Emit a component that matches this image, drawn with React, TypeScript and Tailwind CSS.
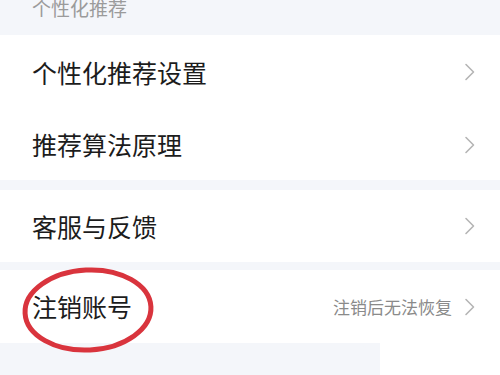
import React from "react";

const font = { fontFamily: '"Noto Sans CJK SC", "Noto Sans", sans-serif' };

function Chevron() {
  return (
    <svg width="12" height="18" viewBox="0 0 12 18" fill="none" className="shrink-0">
      <path d="M2 1.5 L9.5 9 L2 16.5" stroke="#b5b5b5" strokeWidth="1.6" strokeLinecap="round" strokeLinejoin="round" />
    </svg>
  );
}

function Row({ label, hint, h, circled }: { label: string; hint?: string; h: string; circled?: boolean }) {
  return (
    <div className={`relative flex items-center justify-between bg-white pl-[32px] pr-[24px] ${h}`}>
      <span className="text-[25px] leading-none text-[#1c1c1c]">{label}</span>
      <div className="flex items-center gap-[12px]">
        {hint && <span className="text-[17px] leading-none text-[#8a8a8a]">{hint}</span>}
        <Chevron />
      </div>
      {circled && (
        <svg className="pointer-events-none absolute left-[20px] top-[-5px]" width="136" height="90" viewBox="0 0 136 90">
          <ellipse cx="68" cy="45" rx="63" ry="40" fill="none" stroke="#d9343d" strokeWidth="5" transform="rotate(-3 68 45)" />
        </svg>
      )}
    </div>
  );
}

export default function App() {
  return (
    <div className="h-[375px] w-[500px] overflow-hidden bg-[#f4f6fa]" style={font}>
      <div className="flex h-[35px] items-start pl-[32px]">
        <span className="-mt-[2px] text-[19px] leading-none text-[#9b9b9b]">个性化推荐</span>
      </div>
      <Row label="个性化推荐设置" h="h-[74px]" />
      <Row label="推荐算法原理" h="h-[71px]" />
      <div className="h-[10px]" />
      <Row label="客服与反馈" h="h-[72px]" />
      <div className="h-[8px]" />
      <Row label="注销账号" hint="注销后无法恢复" h="h-[73px]" circled />
      <div className="flex h-[40px]">
        <div className="w-[380px] rounded-tr-[30px] bg-[#f4f6fa]" />
        <div className="flex-1 bg-white" />
      </div>
    </div>
  );
}
